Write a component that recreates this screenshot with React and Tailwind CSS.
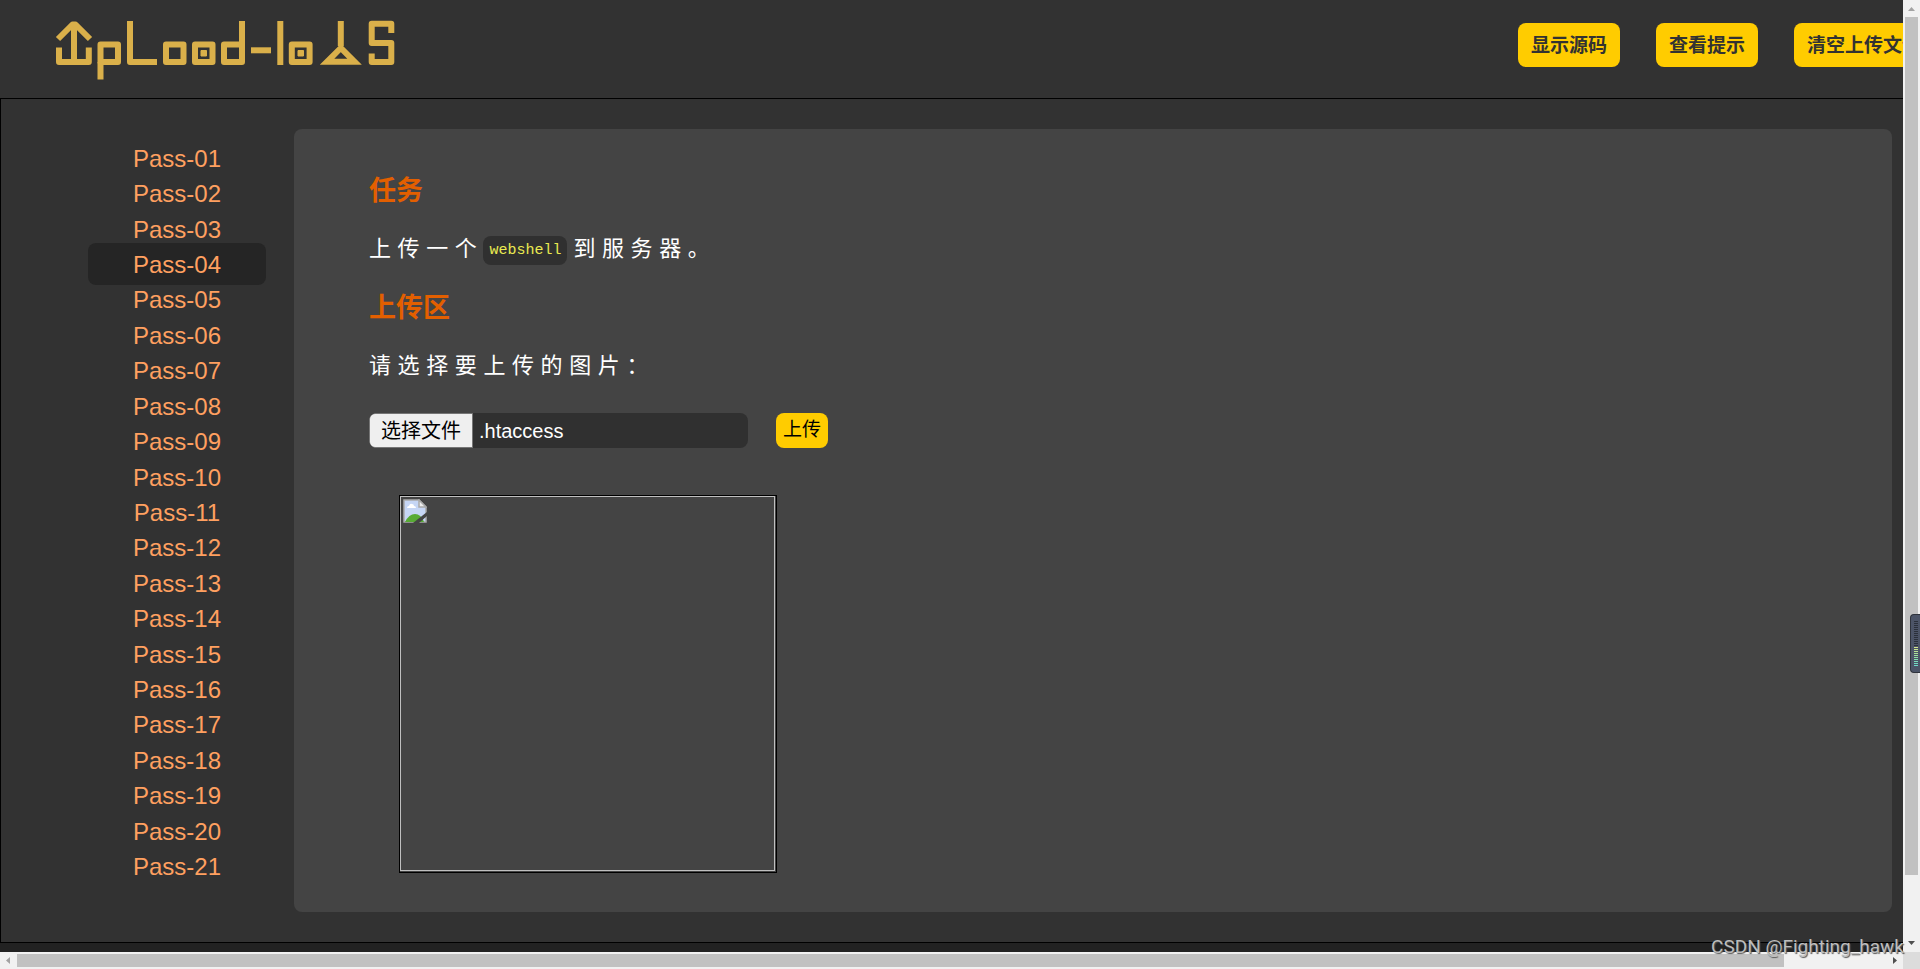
import clsx from "clsx";

const PASSES = Array.from({ length: 21 }, (_, i) => `Pass-${String(i + 1).padStart(2, "0")}`);
const ACTIVE_PASS = "Pass-04";

const ACTIONS = ["显示源码", "查看提示", "清空上传文件"];

const METER_BARS = [
  ...Array(13).fill("#2b303b"),
  "#d3e58b", "#c6e48f", "#b8e394", "#aae199", "#9ce09f",
  "#8fdfa6", "#83deae", "#79ddb8", "#72dcc2", "#6edbca",
];

function Logo() {
  return (
    <svg
      viewBox="55 20 340 60"
      className="h-[60px] w-[340px] shrink-0"
      fill="none"
      stroke="#dab04a"
      strokeWidth="6"
      strokeLinejoin="round"
      role="img"
      aria-label="Upload-labs"
    >
      <line x1="74" y1="24" x2="74" y2="62" />
      <polyline points="58,39 72.5,24.5 75.5,24.5 90,39" />
      <polyline points="59,47.5 59,62 88.8,62 88.8,47.5" />
      <rect x="100.5" y="44.5" width="17.5" height="17.5" />
      <line x1="100.5" y1="62" x2="100.5" y2="79.5" />
      <polyline points="130,21 130,62 157,62" />
      <rect x="166" y="44.5" width="17.5" height="17.5" />
      <rect x="195" y="44.5" width="17.5" height="17.5" />
      <rect x="201" y="50.5" width="5.5" height="5.5" fill="#dab04a" strokeWidth="1" />
      <rect x="224" y="44.5" width="18" height="17.5" />
      <line x1="242" y1="21" x2="242" y2="62" />
      <line x1="251" y1="50.3" x2="271" y2="50.3" />
      <line x1="280.3" y1="21" x2="280.3" y2="65" />
      <rect x="291.8" y="44.5" width="17.8" height="17.5" />
      <rect x="298" y="50.5" width="5.5" height="5.5" fill="#dab04a" strokeWidth="1" />
      <line x1="340.8" y1="21" x2="340.8" y2="46" />
      <polygon points="340.8,48 327,61.8 354.6,61.8" strokeLinejoin="miter" />
      <polyline points="391.3,33 391.3,23.7 371.7,23.7 371.7,43 391.3,43 391.3,62 371.7,62 371.7,53.5" />
    </svg>
  );
}

function BrokenImageIcon() {
  return (
    <svg viewBox="0 0 24 24" className="h-6 w-6" aria-hidden="true">
      <path d="M1 1h15l7 7v15H1z" fill="#c6d6f5" stroke="#a9a9a9" strokeWidth="1.5" />
      <path d="M4 9q0-2 2-2 1-3 3-2 2 0 2 2 2 0 2 2z" fill="#fff" />
      <path d="M2 23q4-8 10-8 6 0 9 8z" fill="#58ab35" />
      <path d="M16 1v7h7z" fill="#eee" stroke="#a9a9a9" strokeWidth="1.5" />
      <path d="M10 24l14-11v4l-8 7z" fill="#444" />
    </svg>
  );
}

function Sidebar() {
  return (
    <nav className="w-[178px] shrink-0 pt-[11px] pb-7">
      <ul className="flex h-full flex-col">
        {PASSES.map((pass) => (
          <li key={pass} className="flex min-h-[35px] flex-1 items-center">
            <a
              href={`#${pass}`}
              className={clsx(
                "-my-1 w-full rounded-lg pt-2 pb-1.5 text-center text-2xl leading-7 text-[#ffa060]",
                pass === ACTIVE_PASS && "bg-[#252525]"
              )}
            >
              {pass}
            </a>
          </li>
        ))}
      </ul>
    </nav>
  );
}

function UploadPanel() {
  return (
    <section className="min-w-0 flex-1 rounded-lg bg-[#444] px-[75px] pt-11 pb-[39px]">
      <h3 className="text-[27px] leading-9 font-bold text-[#e35f00]">任务</h3>
      <p className="mt-6 text-[22px] leading-8 tracking-[0.3em] text-white">
        上传一个
        <code className="mr-1.5 rounded-lg bg-[#303030] px-1.5 py-1.5 align-middle font-['Liberation_Mono',monospace] text-[15px] leading-none tracking-normal text-[#eaea50]">
          webshell
        </code>
        到服务器。
      </p>

      <h3 className="mt-[25px] text-[27px] leading-9 font-bold text-[#e35f00]">上传区</h3>
      <form onSubmit={(e) => e.preventDefault()}>
        <p className="mt-6 text-[22px] leading-8 tracking-[0.3em] text-white">请选择要上传的图片：</p>
        <div className="mt-[31px] flex items-center gap-7">
          <label
            htmlFor="upload_file"
            className="flex h-[35px] w-[379px] items-center overflow-hidden rounded-lg bg-[#303030] text-[20px] text-white"
          >
            <span className="flex h-full w-[104px] items-center justify-center rounded-l-md border border-[#767676] bg-[#efefef] text-black">
              选择文件
            </span>
            <input id="upload_file" type="file" className="sr-only" />
            <span className="ml-1.5">.htaccess</span>
          </label>
          <button type="submit" className="h-[35px] w-[52px] rounded-lg bg-[#fc0] text-[19px] text-black">
            上传
          </button>
        </div>
      </form>

      <div className="mt-[47px] ml-[30px] h-[378px] w-[378px] border border-black pr-px pb-px">
        <div className="h-full border border-[#c0c0c0] p-0.5">
          <BrokenImageIcon />
        </div>
      </div>
    </section>
  );
}

function VerticalScrollbar() {
  return (
    <div className="flex flex-col items-center bg-[#f1f1f1]">
      <svg viewBox="0 0 17 17" className="h-[17px] w-[17px]" aria-hidden="true">
        <path d="M5 11l3.5-4 3.5 4z" fill="#a3a3a3" />
      </svg>
      <div className="w-[13px] flex-1 bg-[#c1c1c1]" />
      <div className="flex h-[77px] items-end">
        <svg viewBox="0 0 17 17" className="h-[17px] w-[17px]" aria-hidden="true">
          <path d="M5 6l3.5 4L12 6z" fill="#505050" />
        </svg>
      </div>
    </div>
  );
}

function HorizontalScrollbar() {
  return (
    <div className="flex items-center bg-[#f1f1f1]">
      <svg viewBox="0 0 17 17" className="h-[17px] w-[17px]" aria-hidden="true">
        <path d="M10 5L6 8.500l4 3.500z" fill="#a3a3a3" />
      </svg>
      <div className="h-[13px] flex-1 bg-[#c1c1c1]" />
      <div className="flex w-[119px] justify-end">
        <svg viewBox="0 0 17 17" className="h-[17px] w-[17px]" aria-hidden="true">
          <path d="M7 5l4 3.500L7 12z" fill="#505050" />
        </svg>
      </div>
    </div>
  );
}

function SideMeter() {
  return (
    <div className="absolute top-[614px] right-0 flex h-[59px] w-2.5 flex-col items-center justify-center gap-px rounded-l-sm border border-r-0 border-[#2f333c] bg-[#4c5467]">
      {METER_BARS.map((color, i) => (
        <span key={i} className="h-px w-1" style={{ backgroundColor: color }} />
      ))}
    </div>
  );
}

export default function App() {
  return (
    <div className="relative grid min-h-screen grid-cols-[minmax(0,1fr)_17px] grid-rows-[1fr_17px] overflow-hidden bg-[#222] font-['Liberation_Sans','Noto_Sans_CJK_SC',sans-serif]">
      <div className="flex flex-col overflow-hidden">
        <header className="flex justify-between bg-[#323232] pt-5 pb-[18px] pl-[55px]">
          <Logo />
          {/* last button runs past the right edge of the viewport */}
          <div className="-mr-[31px] flex shrink-0 gap-9 pt-[3px]">
            {ACTIONS.map((action) => (
              <button
                key={action}
                type="button"
                className="h-11 rounded-lg bg-[#fc0] px-[13px] pt-0.5 text-[19px] font-bold whitespace-nowrap text-[#323232]"
              >
                {action}
              </button>
            ))}
          </div>
        </header>

        <main className="flex gap-7 border-y border-l border-black bg-[#323232] py-[30px] pr-[11px] pl-[87px]">
          <Sidebar />
          <UploadPanel />
        </main>
      </div>
      <VerticalScrollbar />
      <HorizontalScrollbar />
      <div className="bg-[#dcdcdc]" />

      <SideMeter />
      <div className="absolute right-4 bottom-2 font-['Roboto',sans-serif] text-[19px] leading-7 text-[#bdbdbd] [text-shadow:1px_1px_1px_#555]">
        CSDN @Fighting_hawk
      </div>
    </div>
  );
}
